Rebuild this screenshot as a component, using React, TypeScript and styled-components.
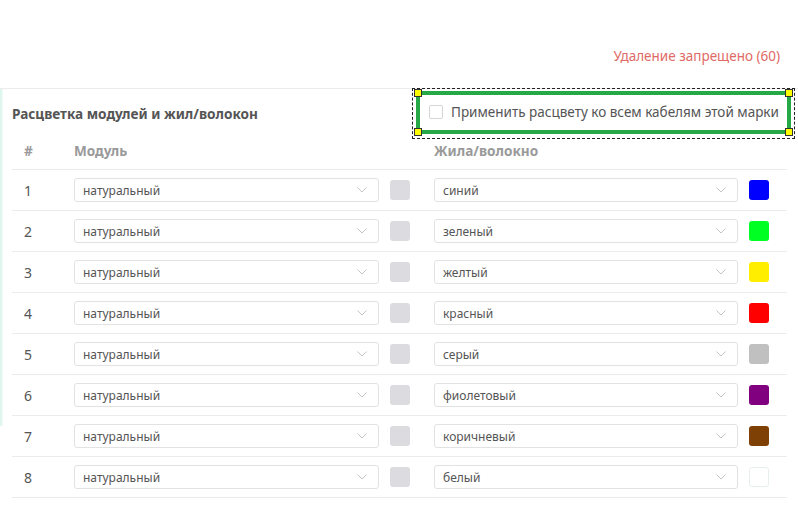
import styled, { createGlobalStyle } from "styled-components";

const GlobalStyle = createGlobalStyle`
  html, body {
    margin: 0;
    padding: 0;
    background: #ffffff;
  }
  body {
    font-family: "Noto Sans", "Open Sans", sans-serif;
    color: #555;
  }
`

const Page = styled.div`
  width: 798px;
  height: 511px;
  overflow: hidden;
  background: #fff;
`

const TopBar = styled.div`
  height: 88px;
  display: flex;
  justify-content: flex-end;
  align-items: flex-start;
  padding: 47px 18px 0 0;
  box-sizing: border-box;
`

const DeleteNote = styled.span`
  font-size: 13.5px;
  color: #e06a66;
`

const Panel = styled.div`
  position: relative;
  border-top: 1px solid #ececec;

  &::before {
    content: "";
    position: absolute;
    left: 0;
    top: 0;
    width: 3px;
    height: 337px;
    background: linear-gradient(to right, #d8f4ec, #f2fbf8);
  }
`

const PanelHead = styled.div`
  display: flex;
  align-items: center;
  justify-content: space-between;
  height: 50px;
  padding: 0 3px 0 12px;
  margin-top: -1px;
`

const Title = styled.h3`
  margin: 0;
  padding-top: 0;
  font-size: 13.6px;
  font-weight: 700;
  color: #555;
`

const SelectionFrame = styled.div`
  height: 51px;
  box-sizing: border-box;
  border: 1px dashed #222;
  padding: 2px 3px 4px 3px;
  display: flex;
`

const Highlight = styled.label`
  position: relative;
  display: flex;
  align-items: center;
  gap: 8px;
  width: 375px;
  box-sizing: border-box;
  border: 4px solid #27a847;
  padding: 0 5px 0 9px;
  font-size: 13.5px;
  color: #555;
  white-space: nowrap;
`

const Handle = styled.span<{ $top: boolean; $left: boolean }>`
  position: absolute;
  width: 6px;
  height: 6px;
  background: #ffff00;
  border: 1px solid #333;
  ${p => (p.$top ? "top: -6px;" : "bottom: -6px;")}
  ${p => (p.$left ? "left: -6px;" : "right: -6px;")}
`

const CheckBox = styled.span`
  width: 12px;
  height: 12px;
  border: 1px solid #d6d6d6;
  border-radius: 2px;
  background: #fff;
  flex-shrink: 0;
`

const Table = styled.div`
  margin: 0 11px 0 12px;
`

const Row = styled.div<{ $head?: boolean }>`
  display: grid;
  grid-template-columns: 62px 360px 335px;
  align-items: ${p => (p.$head ? "start" : "center")};
  height: ${p => (p.$head ? "31px" : "40px")};
  border-bottom: 1px solid #ececec;
`

const HeadCell = styled.div<{ $pad?: boolean }>`
  font-size: 13.6px;
  font-weight: 700;
  color: #9a9a9a;
  padding-top: 3px;
  padding-left: ${p => (p.$pad ? "12px" : "0")};
`

const Num = styled.div`
  padding-left: 12px;
  font-size: 14px;
  color: #555;
`

const Pair = styled.div<{ $w: number }>`
  display: flex;
  align-items: center;
  gap: 11px;
  width: ${p => p.$w}px;
`

const SelectBox = styled.div`
  flex: 1;
  height: 24px;
  box-sizing: border-box;
  border: 1px solid #e2e2e2;
  border-radius: 3px;
  display: flex;
  align-items: center;
  justify-content: space-between;
  padding: 0 11px 0 8px;
  font-size: 12px;
  color: #555;
  background: #fff;
`

const Swatch = styled.span<{ $color: string; $border?: boolean }>`
  width: 20px;
  height: 20px;
  border-radius: 3px;
  background: ${p => p.$color};
  box-sizing: border-box;
  border: ${p => (p.$border ? "1px solid #e8eef0" : "none")};
  flex-shrink: 0;
`

const Chevron = () => (
  <svg width="10" height="6" viewBox="0 0 10 6">
    <path d="M0.5 0.5 L5 5 L9.5 0.5" fill="none" stroke="#c4c4c4" strokeWidth="1" />
  </svg>
)

const fibers = [
  { name: "синий", color: "#0000ff" },
  { name: "зеленый", color: "#00ff22" },
  { name: "желтый", color: "#ffee00" },
  { name: "красный", color: "#ff0000" },
  { name: "серый", color: "#c0c0c0" },
  { name: "фиолетовый", color: "#800080" },
  { name: "коричневый", color: "#7f4005" },
  { name: "белый", color: "#ffffff" },
]

function App() {
  return (
    <Page>
      <GlobalStyle />
      <TopBar>
        <DeleteNote>Удаление запрещено (60)</DeleteNote>
      </TopBar>
      <Panel>
        <PanelHead>
          <Title>Расцветка модулей и жил/волокон</Title>
          <SelectionFrame>
            <Highlight>
              <Handle $top $left />
              <Handle $top $left={false} />
              <Handle $top={false} $left />
              <Handle $top={false} $left={false} />
              <CheckBox />
              Применить расцвету ко всем кабелям этой марки
            </Highlight>
          </SelectionFrame>
        </PanelHead>
        <Table>
          <Row $head>
            <HeadCell $pad>#</HeadCell>
            <HeadCell>Модуль</HeadCell>
            <HeadCell>Жила/волокно</HeadCell>
          </Row>
          {fibers.map((f, i) => (
            <Row key={f.name}>
              <Num>{i + 1}</Num>
              <Pair $w={336}>
                <SelectBox>
                  натуральный
                  <Chevron />
                </SelectBox>
                <Swatch $color="#dcdbe0" />
              </Pair>
              <Pair $w={335}>
                <SelectBox>
                  {f.name}
                  <Chevron />
                </SelectBox>
                <Swatch $color={f.color} $border={f.name === "белый"} />
              </Pair>
            </Row>
          ))}
        </Table>
      </Panel>
    </Page>
  )
}

export default App;
